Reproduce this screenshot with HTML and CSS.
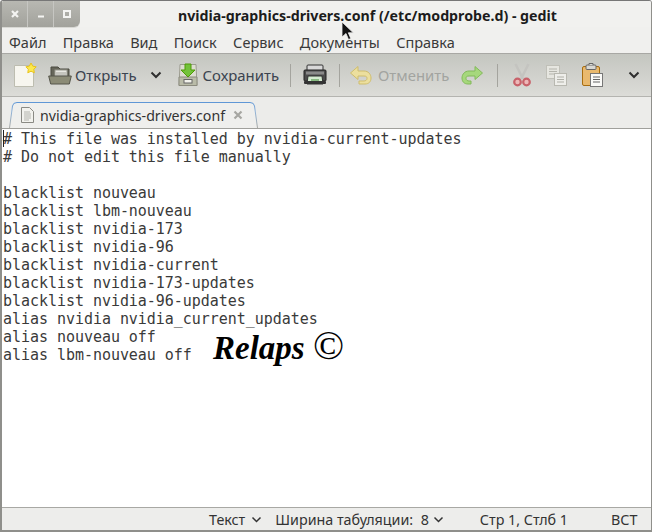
FILE: index.html
```html
<!DOCTYPE html>
<html lang="ru">
<head>
<meta charset="utf-8">
<title>gedit</title>
<link rel="stylesheet" href="styles.css">
</head>
<body>
<div class="window">
  <header class="titlebar">
    <div class="wm-buttons">
      <div class="wm-btn"><svg width="10" height="10" viewBox="0 0 10 10"><path d="M2 2l6 6M8 2l-6 6" stroke="#f4f4f2" stroke-width="2.2"/></svg></div>
      <div class="wm-btn"><svg width="10" height="10" viewBox="0 0 10 10"><path d="M2 7.500h6" stroke="#f4f4f2" stroke-width="2"/></svg></div>
      <div class="wm-btn"><svg width="10" height="10" viewBox="0 0 10 10"><rect x="2" y="2" width="6" height="6" fill="none" stroke="#f4f4f2" stroke-width="2"/></svg></div>
    </div>
    <div class="title">nvidia-graphics-drivers.conf (/etc/modprobe.d) - gedit</div>
  </header>
  <nav class="menubar">
    <span>Файл</span><span>Правка</span><span>Вид</span><span>Поиск</span><span>Сервис</span><span>Документы</span><span>Справка</span>
  </nav>
  <div class="toolbar">
    <svg class="ic-new" width="24" height="26" viewBox="0 0 24 26"><path d="M1.500 3.500h15l4 4v17h-19z" fill="#f7f6ef" stroke="#bdbdb0"/><path d="M18 1l1.800 3.200 3.400.6-2.400 2.500.5 3.500-3.300-1.600-3.200 1.600.5-3.500-2.400-2.500 3.400-.6z" fill="#fce94f" stroke="#e8c21c"/></svg>
    <svg class="ic-open" width="24" height="24" viewBox="0 0 24 24"><path d="M3 19V4h7l2 2h9v13z" fill="#66665a" stroke="#4a4a40"/><rect x="7" y="7" width="12" height="9" fill="#e8e8e2" stroke="#9a9a90"/><path d="M8 10h10M8 12h10" stroke="#a0a098"/><path d="M.7 13h22.600l-2 8H2.700z" fill="#8b8b76" stroke="#55554a"/></svg>
    <span class="tool-label open-label">Открыть</span>
    <svg class="chev open-chev" width="12" height="8" viewBox="0 0 12 8"><path d="M1.500 1.500L6 6l4.500-4.500" fill="none" stroke="#2f2f2f" stroke-width="2"/></svg>
    <svg class="ic-save" width="20" height="24" viewBox="0 0 20 24"><path d="M2 1.500h16l1 21H1z" fill="#dcdcd0" stroke="#9c9c90"/><path d="M1 14h18v8.500H1z" fill="#b9bba8" stroke="#8b8b7e"/><rect x="6" y="16.500" width="8" height="3.500" fill="#f2f2ec" stroke="#666"/><path d="M7 1h6v6h4l-7 7-7-7h4z" fill="#73c23a" stroke="#4e9a06"/></svg>
    <span class="tool-label save-label">Сохранить</span>
    <i class="sep sep-a"></i>
    <svg class="ic-print" width="24" height="22" viewBox="0 0 24 22"><rect x="4" y="1" width="16" height="6" rx="1" fill="#d8d8d8" stroke="#333"/><path d="M2 6h20a1 1 0 0 1 1 1v9a1 1 0 0 1-1 1H2a1 1 0 0 1-1-1V7a1 1 0 0 1 1-1z" fill="#4c4c4c" stroke="#222"/><path d="M3 7.500h18v3H3z" fill="#8a8a8a"/><path d="M5 12h14l1 8H4z" fill="#d4ead0" stroke="#333"/><path d="M8 15h8v3H8z" fill="#86b880"/><rect x="1" y="17" width="22" height="3" rx="1" fill="#333"/></svg>
    <i class="sep sep-b"></i>
    <svg class="ic-undo" width="23" height="20" viewBox="0 0 23 20"><path d="M9 1.500L1.500 8 9 14.500V11h6c2.500 0 3 1 3 2.500S16.500 16 15 16h-5v3h6c4 0 6-2.500 6-6s-2.500-7-7-7H9z" fill="#ecdf9e" stroke="#cfbd6c"/></svg>
    <span class="tool-label undo-label">Отменить</span>
    <svg class="ic-redo" width="23" height="20" viewBox="0 0 23 20"><path d="M14 1.500L21.500 8 14 14.500V11H8c-2.500 0-3 1-3 2.500S6.500 16 8 16h2v3H7c-4 0-6-2.500-6-6s2.500-7 7-7h6z" fill="#a6d87c" stroke="#82b95a"/></svg>
    <i class="sep sep-c"></i>
    <svg class="ic-cut" width="18" height="24" viewBox="0 0 18 24"><path d="M2.500 1l7.500 15M15.500 1L8 16" stroke="#c4c4c0" stroke-width="2.600" fill="none"/><circle cx="4.500" cy="19" r="3.300" fill="#edb8b8" stroke="#c8626a" stroke-width="2.200"/><circle cx="13.500" cy="19" r="3.300" fill="#edb8b8" stroke="#c8626a" stroke-width="2.200"/></svg>
    <svg class="ic-copy" width="21" height="21" viewBox="0 0 21 21"><rect x=".5" y=".5" width="13" height="13" fill="#e6e6e0" stroke="#c0c0b8"/><path d="M3 4h8M3 6.500h8M3 9h6" stroke="#b4b4ac"/><rect x="8.500" y="8.500" width="12" height="12" fill="#eeeeea" stroke="#b8b8b0"/><path d="M11 12h7M11 14.500h7M11 17h7" stroke="#b0b0a8"/></svg>
    <svg class="ic-paste" width="21" height="24" viewBox="0 0 21 24"><rect x=".5" y="3.500" width="17" height="19" rx="1.500" fill="#e9b96e" stroke="#a86d10"/><rect x="4" y="2" width="10" height="4.500" rx="1" fill="#d8d8d4" stroke="#666"/><path d="M7 2V.5h4V2" fill="#d8d8d4" stroke="#666"/><rect x="8.500" y="10.500" width="12" height="13" fill="#fafaf8" stroke="#777"/><path d="M11 14h7M11 16.500h7M11 19h7" stroke="#666"/></svg>
    <svg class="chev more-chev" width="12" height="8" viewBox="0 0 12 8"><path d="M1.500 1.500L6 6l4.500-4.500" fill="none" stroke="#2f2f2f" stroke-width="2"/></svg>
  </div>
  <div class="tabbar">
    <div class="tab">
      <svg class="tab-shape" width="249" height="26" viewBox="0 0 249 26"><defs><linearGradient id="tabedge" x1="0" y1="0" x2="0" y2="1"><stop offset="0" stop-color="#5f97d6"/><stop offset=".35" stop-color="#8fb2d8"/><stop offset="1" stop-color="#a8a8a4"/></linearGradient></defs><path d="M.5 26L3.500 4Q4 .5 8 .5H241Q245 .5 245.500 4L248.500 26" fill="#efefed" stroke="url(#tabedge)"/></svg>
      <svg class="tab-icon" width="13" height="16" viewBox="0 0 13 16"><path d="M.5.500h8l4 4v11H.5z" fill="#f2f2ee" stroke="#8a8a84"/><path d="M3 5h6M3 7h7M3 9h7M3 11h7M3 13h5" stroke="#b4b4ae"/></svg>
      <span class="tab-name">nvidia-graphics-drivers.conf</span>
      <svg class="tab-close" width="10" height="10" viewBox="0 0 10 10"><path d="M1.500 1.500l7 7M8.500 1.500l-7 7" stroke="#a6a6a2" stroke-width="2.200"/></svg>
    </div>
  </div>
  <main class="editor"><i class="caret"></i><pre class="code"># This file was installed by nvidia-current-updates
# Do not edit this file manually

blacklist nouveau
blacklist lbm-nouveau
blacklist nvidia-173
blacklist nvidia-96
blacklist nvidia-current
blacklist nvidia-173-updates
blacklist nvidia-96-updates
alias nvidia nvidia_current_updates
alias nouveau off
alias lbm-nouveau off</pre></main>
  <footer class="statusbar">
    <span class="st-lang">Текст</span>
    <svg class="st-chev st-chev-a" width="11" height="7" viewBox="0 0 11 7"><path d="M1.500 1.500l4 4 4-4" fill="none" stroke="#333" stroke-width="1.500"/></svg>
    <span class="st-tab">Ширина табуляции:&nbsp; 8</span>
    <svg class="st-chev st-chev-b" width="11" height="7" viewBox="0 0 11 7"><path d="M1.500 1.500l4 4 4-4" fill="none" stroke="#333" stroke-width="1.500"/></svg>
    <span class="st-pos">Стр 1, Стлб 1</span>
    <span class="st-ins">ВСТ</span>
  </footer>
  <div class="watermark">Relaps <span class="wm-c">©</span></div>
  <svg class="cursor" width="13" height="20" viewBox="0 0 13 20"><path d="M1 1v15l4-3.500 2.500 6 2.300-1-2.500-5.700h5z" fill="#111" stroke="#eee" stroke-width=".8"/></svg>
</div>
</body>
</html>
```
FILE: styles.css
```css
* { box-sizing: border-box; }
html, body { margin: 0; padding: 0; }
body { width: 652px; height: 532px; overflow: hidden; background: #fff; }
.window {
  position: relative;
  width: 652px;
  height: 532px;
  display: flex;
  flex-direction: column;
  border: 1px solid #8f8f8b;
  border-left-width: 2px;
  border-top-color: #777;
  border-bottom-width: 2px;
  font-family: "Noto Sans", sans-serif;
  color: #3c3c3c;
  border-radius: 3px 3px 0 0;
  overflow: hidden;
}
.titlebar {
  position: relative;
  flex: 0 0 26px;
  background: #f1f1ef;
  display: flex;
}
.wm-buttons {
  width: 78px;
  height: 26px;
  display: flex;
  background: linear-gradient(#b8b8b2, #a2a29c);
  border-bottom-right-radius: 6px;
  box-shadow: 0 1px 0 #d8d8d4;
}
.wm-btn {
  width: 26px;
  display: flex;
  align-items: center;
  justify-content: center;
  border-right: 1px solid #c6c6c2;
}
.wm-btn:last-child { border-right: 0; }
.title {
  margin-left: 98px;
  padding-top: 6px;
  font-size: 14.2px;
  line-height: 18px;
  font-weight: 700;
  color: #1c1c1c;
  white-space: nowrap;
}
.menubar {
  flex: 0 0 27px;
  background: #f0f0ee;
  display: flex;
  align-items: center;
  gap: 16.3px;
  padding: 3px 0 0 7px;
  font-size: 14.5px;
  color: #3a3a3a;
  border-bottom: 1px solid #a8a8a4;
}
.toolbar {
  flex: 0 0 43px;
  background: linear-gradient(#c4c6c0, #dcdcd8);
  border-bottom: 1px solid #b4b4b0;
  display: flex;
  align-items: center;
  font-size: 14.9px;
  position: relative;
}
.tool-label { color: #3b4450; white-space: nowrap; }
.ic-new { margin-left: 11px; }
.ic-open { margin-left: 11px; }
.open-label { margin-left: 3px; }
.open-chev { margin-left: 13px; }
.ic-save { margin-left: 16px; }
.save-label { margin-left: 5px; }
.sep { width: 1px; height: 23px; background: #a4a49e; }
.sep-a { margin-left: 11px; }
.ic-print { margin-left: 12px; }
.sep-b { margin-left: 12px; }
.ic-undo { margin-left: 9px; }
.undo-label { margin-left: 6px; color: #a2a4a0; }
.ic-redo { margin-left: 12px; }
.sep-c { margin-left: 13px; }
.ic-cut { margin-left: 15px; }
.ic-copy { margin-left: 15px; }
.ic-paste { margin-left: 15px; }
.more-chev { margin-left: 25px; }
.tabbar {
  flex: 0 0 32px;
  background: #ececea;
  border-bottom: 1px solid #a0a09c;
  padding: 5px 0 0 7px;
  display: flex;
}
.tab {
  position: relative;
  width: 249px;
  height: 26px;
  display: flex;
  align-items: center;
  padding: 0 0 0 12px;
  font-size: 14.2px;
  color: #333;
}
.tab-shape { position: absolute; left: 0; top: 0; }
.tab-icon, .tab-name, .tab-close { position: relative; }
.tab-name { margin-left: 6px; white-space: nowrap; }
.tab-close { margin-left: 8px; }
.editor {
  position: relative;
  flex: 1;
  background: #fff;
  min-height: 0;
}
.caret {
  position: absolute;
  left: 1px;
  top: 1px;
  width: 1px;
  height: 17px;
  background: #222;
}
.code {
  margin: 0;
  padding: 1px 0 0 1px;
  font-family: "DejaVu Sans Mono", monospace;
  font-size: 15px;
  letter-spacing: -0.04px;
  line-height: 18px;
  color: #3a3a3a;
}
.statusbar {
  flex: 0 0 23px;
  background: #ededeb;
  border-top: 1px solid #a8a8a4;
  display: flex;
  align-items: center;
  font-size: 14.3px;
  color: #333;
}
.st-lang { margin-left: 207px; }
.st-chev-a { margin-left: 6px; }
.st-tab { margin-left: 13px; }
.st-chev-b { margin-left: 4px; }
.st-pos { margin-left: 36px; }
.st-ins { margin-left: 43px; }
.watermark {
  position: absolute;
  left: 211px;
  top: 326px;
  font-family: "Liberation Serif", serif;
  font-style: italic;
  font-weight: 700;
  font-size: 33px;
  line-height: 42px;
  color: #000;
  white-space: nowrap;
}
.wm-c {
  font-size: 41px;
  font-style: normal;
  font-weight: 400;
  line-height: 30px;
}
.cursor { position: absolute; left: 339px; top: 20px; }
```
